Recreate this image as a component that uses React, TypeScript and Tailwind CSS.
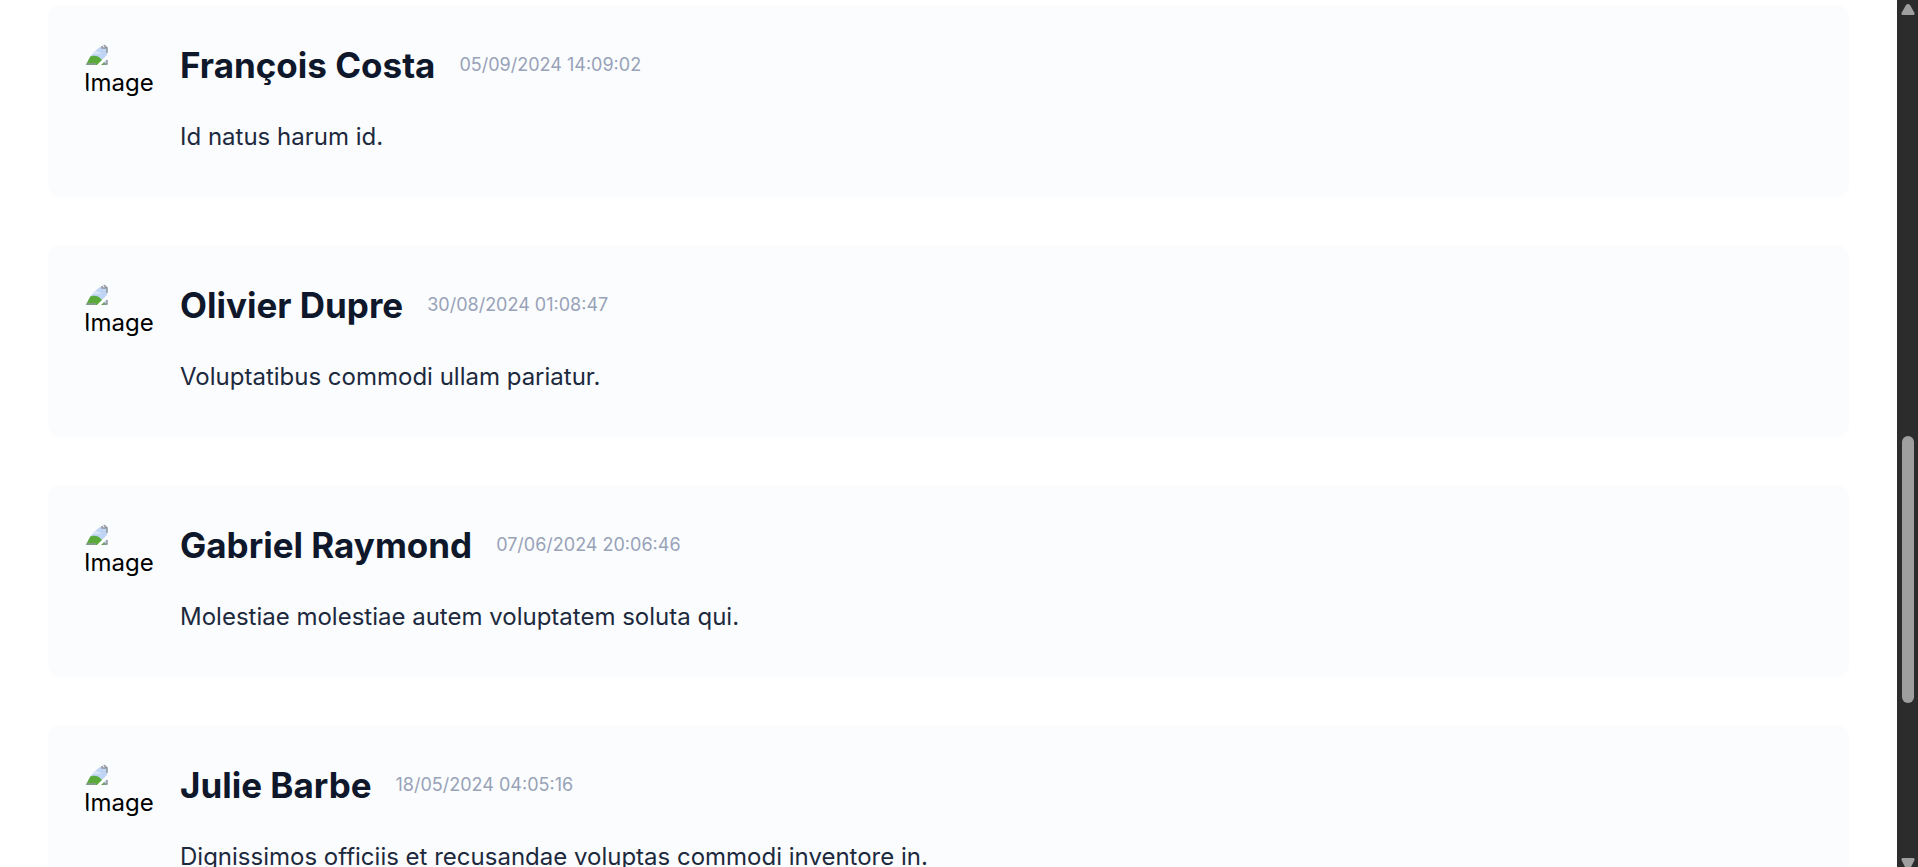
interface Comment {
  id: number;
  author: string;
  date: string;
  text: string;
}

const comments: Comment[] = [
  { id: 1, author: "François Costa", date: "05/09/2024 14:09:02", text: "Id natus harum id." },
  { id: 2, author: "Olivier Dupre", date: "30/08/2024 01:08:47", text: "Voluptatibus commodi ullam pariatur." },
  { id: 3, author: "Gabriel Raymond", date: "07/06/2024 20:06:46", text: "Molestiae molestiae autem voluptatem soluta qui." },
  { id: 4, author: "Julie Barbe", date: "18/05/2024 04:05:16", text: "Dignissimos officiis et recusandae voluptas commodi inventore in." },
];

function BrokenImageIcon() {
  return (
    <svg width="24" height="24" viewBox="0 0 24 24" aria-hidden="true">
      <path d="M1 2h16l6 6v16H1z" fill="#bfd5f3" />
      <path d="M8 13c0-3 6-4 9 0z" fill="#dbe7f7" />
      <path d="M1 24v-5c3-4 11-6 15-2l7 7z" fill="#5aaa3c" />
      <path d="M13 24L24 13v4l-7 7z" fill="#fff" />
      <path d="M18 2v5h5z" fill="#fff" />
      <path d="M18 2v5h5v5M23 19v4h-4M1 23h11M3 2h15l5 5" fill="none" stroke="#8f969e" strokeWidth="1.500" />
    </svg>
  );
}

function Avatar() {
  return (
    <div className="h-18 w-18 shrink-0 overflow-hidden rounded-full text-2xl/9 text-black">
      <BrokenImageIcon />
      <span className="block">Image</span>
    </div>
  );
}

function CommentCard({ comment }: { comment: Comment }) {
  return (
    <article className="flex gap-6 rounded-xl bg-[#fafcfe] p-9">
      <Avatar />
      <div className="min-w-0 flex-1 pb-1">
        <div className="flex items-center gap-6">
          <h3 className="text-[35px]/12 font-bold text-slate-900">{comment.author}</h3>
          <time className="text-lg text-[#98a2b8]">{comment.date}</time>
        </div>
        <p className="mt-7 text-2xl/10 text-slate-800">{comment.text}</p>
      </div>
    </article>
  );
}

// Dark scroll bar along the right edge
function ScrollTrack() {
  return (
    <div className="flex w-[21px] shrink-0 flex-col items-center bg-[#2c2c2c] pt-1">
      <svg width="14" height="11" viewBox="0 0 14 11" fill="#9f9f9f" aria-hidden="true">
        <path d="M5 1Q7-1 9 1L13.500 9Q14 11 12 11H2Q0 11 .5 9z" />
      </svg>
      <div className="flex-[421]" />
      <div className="h-[267px] w-3 rounded-full bg-[#9f9f9f]" />
      <div className="flex-[155]" />
      <svg width="14" height="9" viewBox="0 0 14 9" fill="#9f9f9f" aria-hidden="true">
        <path d="M2 0h10q2 0 1.500 2L10 9H4L.5 2Q0 0 2 0z" />
      </svg>
    </div>
  );
}

export default function App() {
  return (
    <div className="flex h-screen overflow-hidden bg-white font-[Inter,sans-serif]">
      <main className="flex min-w-0 flex-1 flex-col gap-12 overflow-hidden px-12 pt-[5px]">
        {comments.map((comment) => (
          <CommentCard key={comment.id} comment={comment} />
        ))}
      </main>
      <ScrollTrack />
    </div>
  );
}
